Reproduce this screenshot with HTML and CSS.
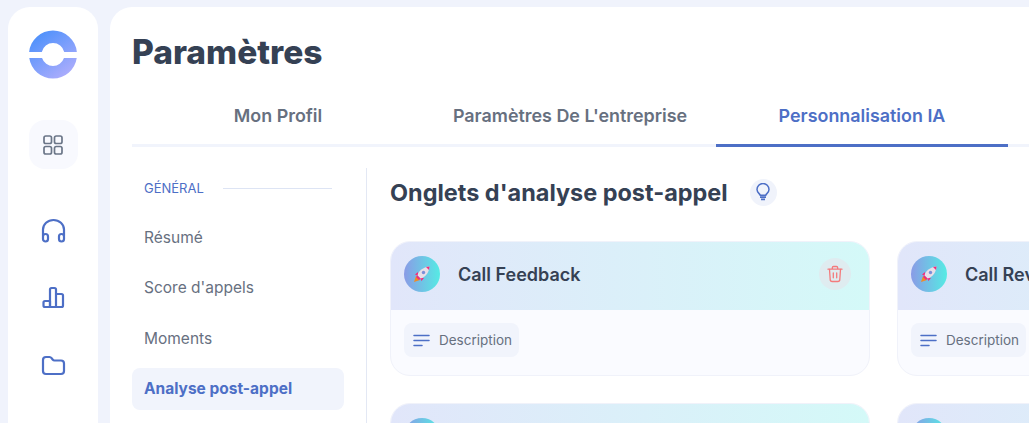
FILE: index.html
```html
<!DOCTYPE html>
<html lang="fr">
<head>
    <meta charset="UTF-8">
    <meta name="viewport" content="width=device-width, initial-scale=1.0">
    <title>Paramètres</title>
    <link rel="stylesheet" href="styles.css">
</head>
<body>
    <div class="app">
        <aside class="sidebar">
            <svg class="logo" width="48" height="49" viewBox="0 0 48 49">
                <defs>
                    <linearGradient id="logoGrad" gradientUnits="userSpaceOnUse" x1="8" y1="2" x2="40" y2="47">
                        <stop offset="0" stop-color="#4b90fb"/>
                        <stop offset="1" stop-color="#b0aefc"/>
                    </linearGradient>
                </defs>
                <path fill="url(#logoGrad)" d="M0.130 22A24 24 0 0 1 47.870 22H35.200A11.500 11.500 0 0 0 12.800 22Z"/>
                <path fill="url(#logoGrad)" d="M0.260 28H13.050A11.500 11.500 0 0 0 34.950 28H47.740A24 24 0 0 1 0.260 28Z"/>
            </svg>
            <div class="nav-home">
                <svg width="22" height="22" viewBox="0 0 22 22" fill="none" stroke="#6b7688" stroke-width="1.700">
                    <rect x="2" y="2" width="7.500" height="7.500" rx="1.800"/>
                    <rect x="12.500" y="2" width="7.500" height="7.500" rx="1.800"/>
                    <rect x="2" y="12.500" width="7.500" height="7.500" rx="1.800"/>
                    <rect x="12.500" y="12.500" width="7.500" height="7.500" rx="1.800"/>
                </svg>
            </div>
            <svg class="nav-icon" width="26" height="26" viewBox="0 0 26 26" fill="none" stroke="#4d6fc6" stroke-width="2.200" stroke-linejoin="round">
                <path d="M3 19V12.500A10.500 9.500 0 0 1 24 12.500V19"/>
                <rect x="3" y="17" width="5" height="7.500" rx="2.500"/>
                <rect x="19" y="17" width="5" height="7.500" rx="2.500"/>
            </svg>
            <svg class="nav-icon" width="26" height="26" viewBox="0 0 26 26" fill="none" stroke="#4d6fc6" stroke-width="2.200" stroke-linejoin="round">
                <path d="M3.500 17.500A1.500 1.500 0 0 1 5 16H10V22H5A1.500 1.500 0 0 1 3.500 20.500Z"/>
                <path d="M10 22V4.500A1.500 1.500 0 0 1 11.500 3H14.500A1.500 1.500 0 0 1 16 4.500V22"/>
                <path d="M16 9H21.500A1.500 1.500 0 0 1 23 10.500V20.500A1.500 1.500 0 0 1 21.500 22H10"/>
            </svg>
            <svg class="nav-icon" width="26" height="26" viewBox="0 0 26 26" fill="none" stroke="#4d6fc6" stroke-width="2.200" stroke-linejoin="round">
                <path d="M3 7A3 3 0 0 1 6 4H9.500C10.500 4 11 4.400 11.600 5.200L12.600 6.500C13 7 13.500 7.500 14.500 7.500H21A3 3 0 0 1 24 10.500V18A3 3 0 0 1 21 21H6A3 3 0 0 1 3 18Z"/>
            </svg>
        </aside>

        <main class="main">
            <h1 class="page-title">Paramètres</h1>
            <nav class="tabs">
                <a class="tab">Mon Profil</a>
                <a class="tab">Paramètres De L'entreprise</a>
                <a class="tab active">Personnalisation IA</a>
            </nav>

            <div class="content">
                <div class="side-menu">
                    <div class="menu-label"><span>GÉNÉRAL</span><i></i></div>
                    <a class="menu-item">Résumé</a>
                    <a class="menu-item">Score d'appels</a>
                    <a class="menu-item">Moments</a>
                    <a class="menu-item active">Analyse post-appel</a>
                </div>

                <section class="panel">
                    <div class="panel-head">
                        <h2>Onglets d'analyse post-appel</h2>
                        <span class="bulb">
                            <svg width="16" height="18" viewBox="0 0 16 18" fill="none" stroke="#4d6fc6" stroke-width="1.500">
                                <path d="M5.200 12.200C5 10.800 2 9.800 2 6.500A6 6 0 0 1 14 6.500C14 9.800 11 10.800 10.800 12.200Z"/>
                                <path d="M5 14.200H11M6 16.400H10" stroke-width="1.700"/>
                            </svg>
                        </span>
                    </div>

                    <div class="cards">
                        <article class="card">
                            <header class="card-head">
                                <span class="avatar"><svg class="rocket" width="18" height="18"><use href="#rocket"/></svg></span>
                                <h3>Call Feedback</h3>
                                <button class="trash">
                                    <svg width="18" height="18" viewBox="0 0 18 18" fill="none" stroke="#f47a7c" stroke-width="1.300" stroke-linecap="round" stroke-linejoin="round">
                                        <path d="M2 4.200H16M6.300 4V2.800A1.300 1.300 0 0 1 7.600 1.500H10.400A1.300 1.300 0 0 1 11.700 2.800V4"/>
                                        <path d="M3.500 4.500L4.200 14.500A2 2 0 0 0 6.200 16.500H11.800A2 2 0 0 0 13.800 14.500L14.500 4.500"/>
                                        <path d="M7.300 8V12.800M10.700 8V12.800"/>
                                    </svg>
                                </button>
                            </header>
                            <div class="card-body">
                                <span class="chip">
                                    <svg width="17" height="13" viewBox="0 0 17 13" fill="none" stroke="#4d6fc6" stroke-width="1.500" stroke-linecap="round"><path d="M1 1.500H16M1 6.500H16M1 11.500H9"/></svg>
                                    Description
                                </span>
                            </div>
                        </article>
                        <article class="card">
                            <header class="card-head">
                                <span class="avatar"><svg class="rocket" width="18" height="18"><use href="#rocket"/></svg></span>
                                <h3>Call Review</h3>
                            </header>
                            <div class="card-body">
                                <span class="chip">
                                    <svg width="17" height="13" viewBox="0 0 17 13" fill="none" stroke="#4d6fc6" stroke-width="1.500" stroke-linecap="round"><path d="M1 1.500H16M1 6.500H16M1 11.500H9"/></svg>
                                    Description
                                </span>
                            </div>
                        </article>
                        <article class="card">
                            <header class="card-head">
                                <span class="avatar"></span>
                            </header>
                        </article>
                        <article class="card">
                            <header class="card-head">
                                <span class="avatar"></span>
                            </header>
                        </article>
                    </div>
                </section>
            </div>
        </main>
    </div>

    <svg width="0" height="0" class="defs">
        <symbol id="rocket" viewBox="0 0 18 18">
            <path fill="#f08a24" d="M3 11L1 17L7 15Z"/>
            <path fill="#f02d7d" d="M5 7L2 9.500L5 11ZM11 13L8.500 16L7 13Z"/>
            <path fill="#e9dfe8" d="M4.500 10.500C5.500 6 10 2 16.500 1.500C16 8 12 12.500 7.500 13.500Z"/>
            <path fill="#f02d7d" d="M13 2L16.500 1.500L16 5Z"/>
            <path fill="#f02d7d" d="M4.500 10.500L7.500 13.500L6 15L3 12Z"/>
            <circle cx="10.500" cy="7.500" r="1.700" fill="#7b8fd8"/>
        </symbol>
    </svg>
</body>
</html>
```

FILE: styles.css
```css
html, body {
    height: 100%;
    margin: 0;
    overflow: hidden;
}
body {
    font-family: 'Inter', sans-serif;
    background-color: #f0f3fc;
    color: #354154;
}
.defs {
    display: block;
    height: 0;
}
.app {
    display: flex;
    gap: 12px;
    height: 100vh;
    padding: 7px 0 0 8px;
    box-sizing: border-box;
}

/* left rail */
.sidebar {
    flex: 0 0 90px;
    display: flex;
    flex-direction: column;
    align-items: center;
    background-color: #ffffff;
    border-radius: 22px 22px 0 0;
    padding-top: 23px;
}
.logo {
    display: block;
}
.nav-home {
    display: flex;
    align-items: center;
    justify-content: center;
    width: 49px;
    height: 49px;
    margin-top: 41px;
    margin-bottom: 48px;
    background-color: #f8f9fe;
    border-radius: 16px;
}
.nav-icon {
    display: block;
    margin-bottom: 42px;
}

/* main area */
.main {
    flex: 1;
    min-width: 0;
    background-color: #ffffff;
    border-radius: 22px 0 0 0;
    padding: 0 0 0 22px;
    overflow: hidden;
}
.page-title {
    margin: 25px 0 0;
    font-size: 33.500px;
    line-height: 40px;
    font-weight: 800;
    color: #354154;
}
.tabs {
    display: flex;
    margin-top: 33px;
    border-bottom: 3px solid #f1f4fc;
}
.tab {
    flex: 0 0 292px;
    text-align: center;
    font-size: 17.900px;
    font-weight: 600;
    line-height: 21px;
    padding-bottom: 18px;
    margin-bottom: -3px;
    color: #67707f;
}
.tab.active {
    color: #4d6fc6;
    border-bottom: 3px solid #4d6fc6;
}
.content {
    display: flex;
    margin-top: 21px;
}
.side-menu {
    flex: 0 0 212px;
    padding-right: 22px;
    border-right: 1px solid #e3e8f4;
}
.menu-label {
    display: flex;
    align-items: center;
    gap: 19px;
    padding: 12px 12px 0;
    font-size: 13px;
    line-height: 16px;
    color: #4d6fc6;
}
.menu-label i {
    flex: 1;
    height: 1px;
    background-color: #dde4f4;
}
.menu-item {
    display: block;
    font-size: 15.500px;
    line-height: 42px;
    padding: 0 12px;
    margin-top: 8.500px;
    color: #67707f;
    border-radius: 8px;
}
.menu-label + .menu-item {
    margin-top: 20.500px;
}
.menu-item.active {
    color: #4d6fc6;
    font-weight: 700;
    background-color: #f1f4fc;
}
.panel {
    margin-left: 23px;
}
.panel-head {
    display: flex;
    align-items: center;
    gap: 22px;
    height: 48px;
}
.panel-head h2 {
    margin: 0;
    font-size: 23.450px;
    font-weight: 700;
    color: #354154;
}
.bulb {
    display: flex;
    align-items: center;
    justify-content: center;
    width: 27px;
    height: 27px;
    background-color: #f0f3fb;
    border-radius: 50%;
}
.cards {
    display: grid;
    grid-template-columns: 480px 480px;
    gap: 27px;
    margin-top: 25px;
}
.card {
    height: 135px;
    box-sizing: border-box;
    background-color: #fafbff;
    border: 1px solid #f0f2fa;
    border-radius: 20px;
    overflow: hidden;
}
.card-head {
    display: flex;
    align-items: center;
    height: 68px;
    box-sizing: border-box;
    padding: 0 18px 4px 13px;
    background-image: linear-gradient(90deg, #e1e6fa, #d4f9f8);
}
.card-head h3 {
    flex: 1;
    margin: 0 0 0 18px;
    font-size: 18px;
    font-weight: 600;
    color: #354154;
}
.avatar {
    display: flex;
    align-items: center;
    justify-content: center;
    width: 36px;
    height: 36px;
    border-radius: 50%;
    background-image: linear-gradient(90deg, #8a9be6, #55ebe4);
}
.trash {
    display: flex;
    align-items: center;
    justify-content: center;
    width: 32px;
    height: 32px;
    padding: 0;
    border: 0;
    border-radius: 50%;
    background-color: #dfecf0;
}
.card-body {
    padding: 13px;
}
.chip {
    display: inline-flex;
    align-items: center;
    gap: 9px;
    height: 34px;
    padding: 0 7px 0 9px;
    font-size: 13.500px;
    color: #67707f;
    background-color: #f1f4fc;
    border-radius: 8px;
}
```
